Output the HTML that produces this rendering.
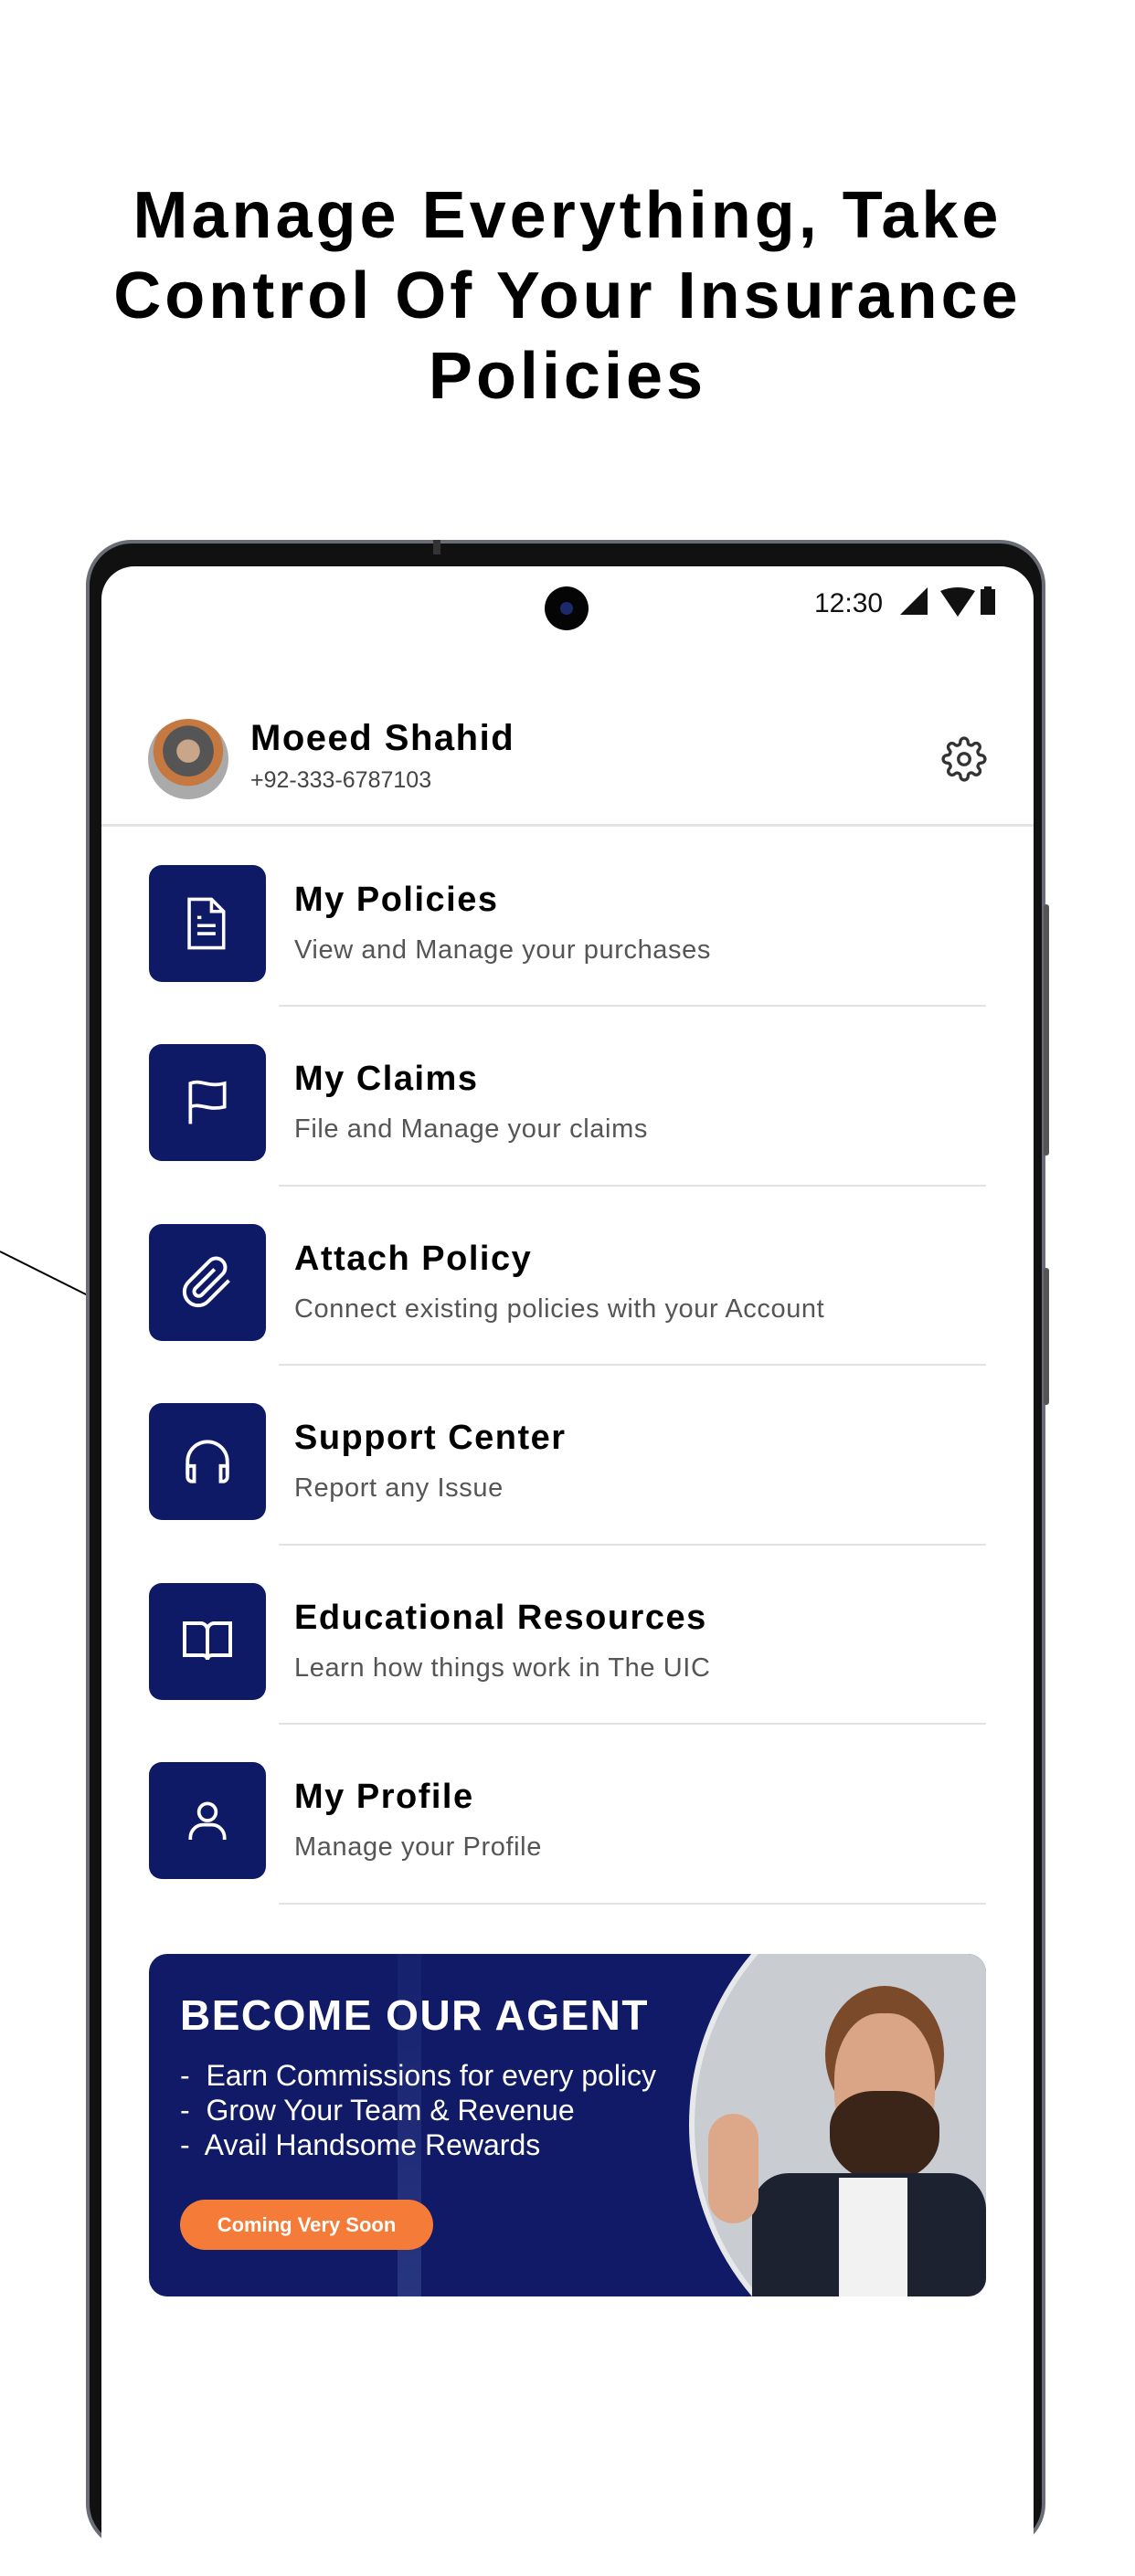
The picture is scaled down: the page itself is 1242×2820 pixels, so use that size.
<!DOCTYPE html>
<html><head><meta charset="utf-8"><style>
*{margin:0;padding:0;box-sizing:border-box}
body{width:1242px;height:2688px;background:#fff;position:relative;overflow:hidden;font-family:"Liberation Sans",sans-serif}
.title{position:absolute;top:192px;left:0;width:1242px;text-align:center;font-weight:bold;font-size:72px;line-height:88px;color:#000;letter-spacing:4px}
.phone{position:absolute;left:94px;top:591px;width:1050px;height:2200px;background:#111;border-radius:50px;border:4px solid #6a6d75}
.screen{position:absolute;left:111px;top:620px;width:1020px;height:2200px;background:#fff;border-radius:36px}
.abs{position:absolute}
.item-t{position:absolute;left:322px;font-weight:bold;font-size:38px;letter-spacing:1.5px;color:#000}
.item-s{position:absolute;left:322px;font-size:29px;letter-spacing:0.6px;color:#555}
.box{position:absolute;left:163px;width:128px;height:128px;background:#0f1a66;border-radius:14px;display:flex;align-items:center;justify-content:center}
.sep{position:absolute;left:305px;width:774px;height:2px;background:#e2e2e2}
</style></head><body>
<div class="title">Manage Everything, Take<br>Control Of Your Insurance<br>Policies</div>
<svg class="abs" style="left:0;top:1360px" width="100" height="70"><line x1="0" y1="10" x2="96" y2="58" stroke="#000" stroke-width="2"/></svg>
<div class="phone"></div>
<div class="abs" style="left:1142px;top:990px;width:6px;height:275px;background:#555;border-radius:3px"></div>
<div class="abs" style="left:1142px;top:1388px;width:6px;height:150px;background:#555;border-radius:3px"></div>
<div class="abs" style="left:474px;top:591px;width:8px;height:16px;background:#333"></div>
<div class="screen"></div>
<div class="abs" style="left:596px;top:642px;width:48px;height:48px;border-radius:50%;background:#050505"><div class="abs" style="left:17px;top:17px;width:14px;height:14px;border-radius:50%;background:#1b2a6a"></div></div>
<div class="abs" style="left:891px;top:644px;font-size:30px;color:#111">12:30</div>
<svg class="abs" style="left:985px;top:641px" width="110" height="36"><polygon points="0,32 30,2 30,32" fill="#111"/><path d="M44 6 Q63 -2 82 6 L63 34 Z" fill="#111"/><rect x="88" y="4" width="16" height="28" fill="#111"/><rect x="92" y="1" width="8" height="4" fill="#111"/></svg>
<div class="abs" style="left:162px;top:787px;width:88px;height:88px;border-radius:50%;background:radial-gradient(circle at 50% 40%,#c9a58a 0 18%,#555 19% 40%,#c57840 41% 55%,#aaa 56%)"></div>
<div class="abs" style="left:274px;top:786px;font-weight:bold;font-size:40px;letter-spacing:1.5px;color:#000">Moeed Shahid</div>
<div class="abs" style="left:274px;top:840px;font-size:25px;color:#444">+92-333-6787103</div>
<svg class="abs" style="left:1030px;top:806px" width="50" height="50" viewBox="0 0 24 24" fill="none" stroke="#333" stroke-width="1.6"><circle cx="12" cy="12" r="3"/><path d="M19.4 15a1.65 1.65 0 0 0 .33 1.82l.06.06a2 2 0 1 1-2.830 2.83l-.06-.06a1.65 1.65 0 0 0-1.82-.33 1.65 1.65 0 0 0-1 1.51V21a2 2 0 1 1-4 0v-.09A1.650 1.65 0 0 0 9 19.4a1.65 1.65 0 0 0-1.82.33l-.06.06a2 2 0 1 1-2.83-2.83l.06-.06A1.65 1.65 0 0 0 4.68 15a1.65 1.65 0 0 0-1.51-1H3a2 2 0 1 1 0-4h.09A1.65 1.65 0 0 0 4.6 9a1.65 1.65 0 0 0-.33-1.82l-.06-.06a2 2 0 1 1 2.83-2.83l.06.06A1.65 1.65 0 0 0 9 4.68 1.65 1.65 0 0 0 10 3.17V3a2 2 0 1 1 4 0v.09a1.65 1.65 0 0 0 1 1.51 1.65 1.65 0 0 0 1.82-.33l.06-.06a2 2 0 1 1 2.83 2.83l-.06.06A1.65 1.65 0 0 0 19.4 9a1.65 1.65 0 0 0 1.51 1H21a2 2 0 1 1 0 4h-.09a1.65 1.65 0 0 0-1.51 1z"/></svg>
<div class="abs" style="left:111px;top:902px;width:1020px;height:3px;background:#e4e4e4"></div>

<div class="box" style="top:947px"><svg width="54" height="62" viewBox="0 0 24 28" fill="none" stroke="#fff" stroke-width="1.6"><path d="M3 2h11l6 6v18H3z"/><path d="M14 2v6h6"/><path d="M7 11h2M7 15h9M7 19h9"/></svg></div>
<div class="item-t" style="top:964px">My Policies</div><div class="item-s" style="top:1024px">View and Manage your purchases</div><div class="sep" style="top:1100px"></div>

<div class="box" style="top:1143px"><svg width="56" height="56" viewBox="0 0 24 24" fill="none" stroke="#fff" stroke-width="1.6"><path d="M4 22V3c5-2 8 2 16 0v11c-8 2-11-2-16 0"/></svg></div>
<div class="item-t" style="top:1160px">My Claims</div><div class="item-s" style="top:1220px">File and Manage your claims</div><div class="sep" style="top:1297px"></div>

<div class="box" style="top:1340px"><svg width="60" height="60" viewBox="0 0 24 24" fill="none" stroke="#fff" stroke-width="1.6"><path d="M21.4 11.1l-9.2 9.2a6 6 0 0 1-8.5-8.5l9.2-9.2a4 4 0 0 1 5.7 5.7l-9.2 9.2a2 2 0 0 1-2.8-2.8l8.5-8.5"/></svg></div>
<div class="item-t" style="top:1357px">Attach Policy</div><div class="item-s" style="top:1417px">Connect existing policies with your Account</div><div class="sep" style="top:1493px"></div>

<div class="box" style="top:1536px"><svg width="58" height="58" viewBox="0 0 24 24" fill="none" stroke="#fff" stroke-width="1.6"><path d="M3 18v-6a9 9 0 0 1 18 0v6"/><path d="M21 19a2 2 0 0 1-2 2h-1v-7h3zM3 19a2 2 0 0 0 2 2h1v-7H3z"/></svg></div>
<div class="item-t" style="top:1553px">Support Center</div><div class="item-s" style="top:1613px">Report any Issue</div><div class="sep" style="top:1690px"></div>

<div class="box" style="top:1733px"><svg width="60" height="60" viewBox="0 0 24 24" fill="none" stroke="#fff" stroke-width="1.6"><path d="M2 4h7a3 3 0 0 1 3 3v13a2 2 0 0 0-2-2H2zM22 4h-7a3 3 0 0 0-3 3v13a2 2 0 0 1 2-2h8z"/></svg></div>
<div class="item-t" style="top:1750px">Educational Resources</div><div class="item-s" style="top:1810px">Learn how things work in The UIC</div><div class="sep" style="top:1886px"></div>

<div class="box" style="top:1929px"><svg width="56" height="56" viewBox="0 0 24 24" fill="none" stroke="#fff" stroke-width="1.6"><circle cx="12" cy="8" r="4"/><path d="M4 21v-1a6 6 0 0 1 6-6h4a6 6 0 0 1 6 6v1"/></svg></div>
<div class="item-t" style="top:1946px">My Profile</div><div class="item-s" style="top:2006px">Manage your Profile</div><div class="sep" style="top:2083px"></div>

<div class="abs" style="left:163px;top:2139px;width:916px;height:375px;border-radius:20px;overflow:hidden;background:#101a66">
  <div class="abs" style="left:272px;top:0;width:26px;height:375px;background:linear-gradient(#16216e,#28357f)"></div>
  <div class="abs" style="left:591px;top:-104px;width:582px;height:582px;border-radius:50%;background:#c9ccd1;border:6px solid #e7e8ea"></div>
  <div class="abs" style="left:740px;top:35px;width:130px;height:150px;border-radius:50%;background:#7a4a2a"></div>
  <div class="abs" style="left:750px;top:65px;width:110px;height:160px;border-radius:45%;background:#d9a586"></div>
  <div class="abs" style="left:745px;top:150px;width:120px;height:100px;border-radius:40% 40% 50% 50%;background:#3a2518"></div>
  <div class="abs" style="left:660px;top:240px;width:256px;height:160px;border-radius:40px 40px 0 0;background:#1c2230"></div>
  <div class="abs" style="left:755px;top:245px;width:75px;height:140px;background:#f2f2f2"></div>
  <div class="abs" style="left:612px;top:175px;width:55px;height:120px;border-radius:28px;background:#dca889"></div>
  <div class="abs" style="left:34px;top:40px;font-weight:bold;font-size:46px;color:#fff;letter-spacing:1.5px">BECOME OUR AGENT</div>
  <div class="abs" style="left:34px;top:114px;font-size:32px;line-height:38px;color:#fff">-&nbsp; Earn Commissions for every policy<br>-&nbsp; Grow Your Team &amp; Revenue<br>-&nbsp; Avail Handsome Rewards</div>
  <div class="abs" style="left:34px;top:269px;width:277px;height:55px;border-radius:28px;background:#f47c38;color:#fff;font-weight:bold;font-size:22px;line-height:55px;text-align:center">Coming Very Soon</div>
</div>
</body></html>
